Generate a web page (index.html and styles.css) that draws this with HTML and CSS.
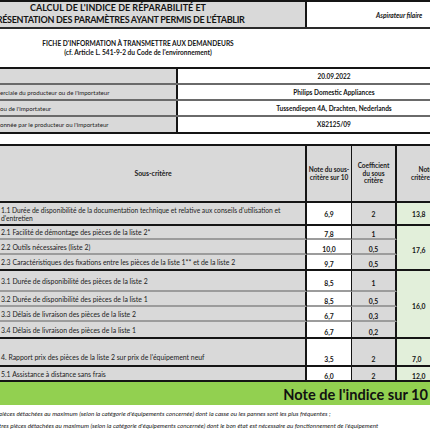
FILE: index.html
```html
<!DOCTYPE html>
<html lang="fr">
<head>
<meta charset="utf-8">
<link rel="stylesheet" href="styles.css">
</head>
<body>
<div class="sheet">
  <div class="title-row">
    <div class="title-cell">
      <div class="title-line">CALCUL DE L'INDICE DE RÉPARABILITÉ ET</div>
      <div class="title-line tight">PRÉSENTATION DES PARAMÈTRES AYANT PERMIS DE L'ÉTABLIR</div>
    </div>
    <div class="product-cell">Aspirateur filaire</div>
  </div>

  <div class="fiche">
    <div class="fiche-line">FICHE D'INFORMATION À TRANSMETTRE AUX DEMANDEURS</div>
    <div class="fiche-line">(cf. Article L. 541-9-2 du Code de l'environnement)</div>
  </div>

  <div class="info">
    <div class="info-row"><div class="info-label"></div><div class="info-value">20.09.2022</div></div>
    <div class="info-row"><div class="info-label">erciale du producteur ou de l'importateur</div><div class="info-value">Philips Domestic Appliances</div></div>
    <div class="info-row"><div class="info-label">ou de l'importateur</div><div class="info-value">Tussendiepen 4A, Drachten, Nederlands</div></div>
    <div class="info-row last"><div class="info-label">onnée par le producteur ou l'importateur</div><div class="info-value">X82125/09</div></div>
  </div>

  <div class="grid">
    <div class="c lab head bk">Sous-critère</div>
    <div class="c note head bk">Note du sous-<br>critère sur 10</div>
    <div class="c coef head bk">Coefficient<br>du sous<br>critère</div>
    <div class="c crit head hd bk">Note du<br>critère sur 10</div>

    <div class="c lab two bk">1.1 Durée de disponibilité de la documentation technique et relative aux conseils d'utilisation et<br>d'entretien</div>
    <div class="c note val bk">6,9</div>
    <div class="c coef val bk">2</div>
    <div class="c crit val bk">13,8</div>

    <div class="c lab gy">2.1 Facilité de démontage des pièces de la liste 2*</div>
    <div class="c note val low gy">7,8</div>
    <div class="c coef val low gy">1</div>
    <div class="c crit val low bk span3">17,6</div>

    <div class="c lab gy">2.2 Outils nécessaires (liste 2)</div>
    <div class="c note val low gy">10,0</div>
    <div class="c coef val low gy">0,5</div>

    <div class="c lab bk">2.3 Caractéristiques des fixations entre les pièces de la liste 1** et de la liste 2</div>
    <div class="c note val low bk">9,7</div>
    <div class="c coef val low bk">0,5</div>

    <div class="c lab gy">3.1 Durée de disponibilité des pièces de la liste 2</div>
    <div class="c note val low gy">8,5</div>
    <div class="c coef val low gy">1</div>
    <div class="c crit val low bk span4">16,0</div>

    <div class="c lab gy">3.2 Durée de disponibilité des pièces de la liste 1</div>
    <div class="c note val low gy">8,5</div>
    <div class="c coef val low gy">0,5</div>

    <div class="c lab gy">3.3 Délais de livraison des pièces de la liste 2</div>
    <div class="c note val low gy">6,7</div>
    <div class="c coef val low gy">0,3</div>

    <div class="c lab bk">3.4 Délais de livraison des pièces de la liste 1</div>
    <div class="c note val low bk">6,7</div>
    <div class="c coef val low bk">0,2</div>

    <div class="c lab tall bk">4. Rapport prix des pièces de la liste 2 sur prix de l'équipement neuf</div>
    <div class="c note val tallv bk">3,5</div>
    <div class="c coef val tallv bk">2</div>
    <div class="c crit val tallv bk">7,0</div>

    <div class="c lab bk">5.1 Assistance à distance sans frais</div>
    <div class="c note val low bk">6,0</div>
    <div class="c coef val low bk">2</div>
    <div class="c crit val low bk">12,0</div>
  </div>

  <div class="score">Note de l'indice sur 10</div>

  <div class="footer">
    <div class="foot-line">pièces détachées au maximum (selon la catégorie d'équipements concernée) dont la casse ou les pannes sont les plus fréquentes ;</div>
    <div class="foot-line">tres pièces détachées au maximum (selon la catégorie d'équipements concernée) dont le bon état est nécessaire au fonctionnement de l'équipement</div>
  </div>
</div>
</body>
</html>
```

FILE: styles.css
```css
html, body {
  margin: 0;
  padding: 0;
  overflow: hidden;
  background: #ffffff;
}

body {
  width: 430px;
  height: 430px;
  font-family: Lato, "Open Sans", "Liberation Sans", sans-serif;
  color: #141414;
}

.sheet {
  width: 430px;
  overflow: hidden;
}

/* Title */
.title-row {
  display: flex;
  height: 29px;
  box-sizing: border-box;
  border-top: 2px solid #151515;
  border-bottom: 2px solid #2a2a2a;
}

.title-cell {
  width: 307px;
  flex: none;
  box-sizing: border-box;
  padding-right: 69px;
  padding-bottom: 2px;
  background: #d9d9d9;
  border-right: 2px solid #151515;
  display: flex;
  flex-direction: column;
  align-items: center;
  justify-content: center;
  font-weight: 700;
  font-size: 9px;
  line-height: 12px;
  white-space: nowrap;
}

.title-line.tight {
  letter-spacing: -0.3px;
}

.product-cell {
  flex: 1;
  display: flex;
  align-items: center;
  padding-left: 69px;
  font-weight: 700;
  font-style: italic;
  font-size: 6.6px;
  white-space: nowrap;
}

/* Fiche */
.fiche {
  height: 38px;
  box-sizing: border-box;
  padding-top: 10px;
  padding-right: 154px;
  display: flex;
  flex-direction: column;
  align-items: center;
  font-weight: 700;
  font-size: 6.6px;
  line-height: 9px;
  white-space: nowrap;
}

/* Info table */
.info {
  border-top: 2px solid #151515;
  border-bottom: 2px solid #151515;
}

.info-row {
  display: grid;
  grid-template-columns: 178px 1fr;
  height: 16px;
  box-sizing: border-box;
  border-bottom: 2px solid #6a6a6a;
}

.info-row.last {
  height: 15px;
  border-bottom: none;
}

.info-label {
  background: #d9d9d9;
  border-right: 2px solid #151515;
  display: flex;
  align-items: center;
  font-size: 6.1px;
  color: #222;
  white-space: nowrap;
  overflow: hidden;
}

.info-value {
  display: flex;
  align-items: center;
  justify-content: center;
  padding-left: 60px;
  font-weight: 700;
  font-size: 6.5px;
  white-space: nowrap;
}

/* Main grid */
.grid {
  margin-top: 10px;
  width: 444px;
  display: grid;
  grid-template-columns: 307px 45px 45px 47px;
  grid-template-rows: 57px 23px 14px 15px 16px 21px 15px 15px 17px 28px 15px;
  border-top: 2px solid #151515;
}

.c {
  box-sizing: border-box;
  display: flex;
  align-items: center;
  white-space: nowrap;
  overflow: hidden;
}

.bk { border-bottom: 2px solid #151515; }
.gy { border-bottom: 2px solid #9c9c9c; }

.lab {
  background: #d9d9d9;
  border-right: 2px solid #151515;
  font-size: 6.9px;
  line-height: 8px;
  padding-left: 1px;
  color: #222;
}

.lab.two {
  flex-wrap: wrap;
  white-space: normal;
  font-size: 6.7px;
}
.lab.tall { padding-top: 10px; }

.note {
  background: #ffffff;
  border-right: 1.5px solid #151515;
  justify-content: center;
}

.coef {
  background: #d9d9d9;
  border-right: 2px solid #151515;
  justify-content: center;
}

.crit {
  background: #e2efda;
  justify-content: flex-start;
  padding-left: 15px;
}

.head {
  background: #d9d9d9;
  font-weight: 700;
  font-size: 6.5px;
  line-height: 7.6px;
  text-align: center;
  color: #222;
}

.lab.head {
  justify-content: center;
  font-size: 6.9px;
}

.crit.hd {
  background: #d9d9d9;
  justify-content: flex-start;
  padding-left: 14px;
  text-align: center;
}

.val {
  font-weight: 700;
  font-size: 6.8px;
}

.low { padding-top: 4px; }
.tallv { padding-top: 14px; }

.span3 { grid-row: span 3; }
.span4 { grid-row: span 4; }

/* Score bar */
.score {
  height: 23px;
  box-sizing: border-box;
  background: #92d050;
  display: flex;
  align-items: flex-end;
  justify-content: flex-end;
  padding-right: 2px;
  padding-bottom: 1px;
  font-weight: 700;
  font-size: 14.6px;
  line-height: 18px;
  color: #111;
}

/* Footer */
.footer {
  padding-top: 3px;
  font-style: italic;
  font-size: 6.25px;
  line-height: 12px;
  white-space: nowrap;
  color: #222;
}

.foot-line {
  margin-left: -1px;
}
```
